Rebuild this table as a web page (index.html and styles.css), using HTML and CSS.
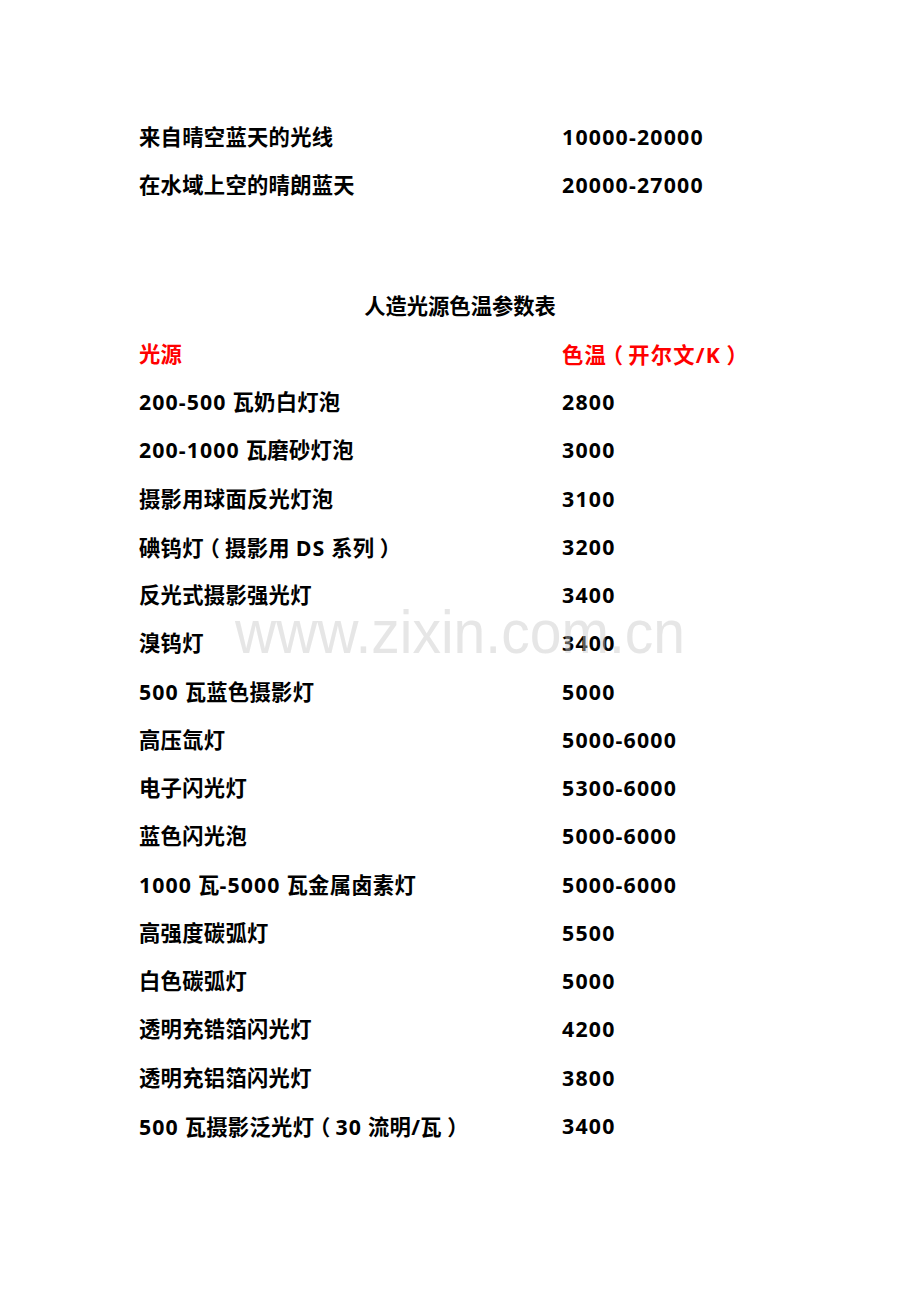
FILE: index.html
```html
<!DOCTYPE html>
<html lang="zh-CN">
<head>
<meta charset="utf-8">
<title>人造光源色温参数表</title>
<link rel="stylesheet" href="styles.css">
</head>
<body>
<div class="page">
  <div class="table">
    <div class="row"><span class="name">来自晴空蓝天的光线</span><span class="val">10000-20000</span></div>
    <div class="row"><span class="name">在水域上空的晴朗蓝天</span><span class="val">20000-27000</span></div>
  </div>
  <div class="title">人造光源色温参数表</div>
  <div class="table">
    <div class="row head"><span class="name">光源</span><span class="val">色温<span class="p">（</span>开尔文/K<span class="p">）</span></span></div>
    <div class="row"><span class="name"><span class="l">200-500</span> 瓦奶白灯泡</span><span class="val">2800</span></div>
    <div class="row"><span class="name"><span class="l">200-1000</span> 瓦磨砂灯泡</span><span class="val">3000</span></div>
    <div class="row"><span class="name">摄影用球面反光灯泡</span><span class="val">3100</span></div>
    <div class="row"><span class="name">碘钨灯<span class="p">（</span>摄影用 <span class="l">DS</span> 系列<span class="p">）</span></span><span class="val">3200</span></div>
    <div class="row"><span class="name">反光式摄影强光灯</span><span class="val">3400</span></div>
    <div class="row"><span class="name">溴钨灯</span><span class="val">3400</span></div>
    <div class="row"><span class="name"><span class="l">500</span> 瓦蓝色摄影灯</span><span class="val">5000</span></div>
    <div class="row"><span class="name">高压氙灯</span><span class="val">5000-6000</span></div>
    <div class="row"><span class="name">电子闪光灯</span><span class="val">5300-6000</span></div>
    <div class="row"><span class="name">蓝色闪光泡</span><span class="val">5000-6000</span></div>
    <div class="row"><span class="name"><span class="l">1000</span> 瓦<span class="l">-5000</span> 瓦金属卤素灯</span><span class="val">5000-6000</span></div>
    <div class="row"><span class="name">高强度碳弧灯</span><span class="val">5500</span></div>
    <div class="row"><span class="name">白色碳弧灯</span><span class="val">5000</span></div>
    <div class="row"><span class="name">透明充锆箔闪光灯</span><span class="val">4200</span></div>
    <div class="row"><span class="name">透明充铝箔闪光灯</span><span class="val">3800</span></div>
    <div class="row"><span class="name"><span class="l">500</span> 瓦摄影泛光灯<span class="p">（</span><span class="l">30</span> 流明/瓦<span class="p">）</span></span><span class="val">3400</span></div>
  </div>
  <div class="watermark">www.zixin.com.cn</div>
</div>
</body>
</html>
```
FILE: styles.css
```css
html, body {
  margin: 0;
  padding: 0;
  background: #ffffff;
}
.page {
  position: relative;
  width: 920px;
  height: 1302px;
  box-sizing: border-box;
  padding-top: 113px;
  font-family: "Open Sans", "Noto Sans CJK SC", sans-serif;
  font-weight: 700;
  font-size: 21.3px;
  color: #000000;
  overflow: hidden;
}
.table {
  display: flex;
  flex-direction: column;
  padding-left: 139px;
}
.row {
  display: grid;
  grid-template-columns: 423px auto;
  height: 48.25px;
  line-height: 48.25px;
  white-space: nowrap;
}
.name {
  letter-spacing: 0.3px;
}
.l {
  letter-spacing: 1.1px;
}
.val {
  letter-spacing: 1.2px;
}
.p {
  display: inline-block;
  width: 1em;
  text-align: center;
  letter-spacing: 0;
  font-family: "Noto Sans CJK SC", sans-serif;
  font-feature-settings: "halt" 1;
}
.head {
  color: #ff0000;
}
.title {
  margin-top: 72px;
  height: 48.25px;
  line-height: 48.25px;
  text-align: center;
}
.watermark {
  position: absolute;
  left: 0;
  right: 0;
  top: 592px;
  text-align: center;
  font-family: "Liberation Sans", Arial, sans-serif;
  font-weight: 400;
  font-size: 62px;
  line-height: 80px;
  color: rgba(200, 200, 200, 0.45);
  transform: scaleX(0.92);
  pointer-events: none;
}
```
